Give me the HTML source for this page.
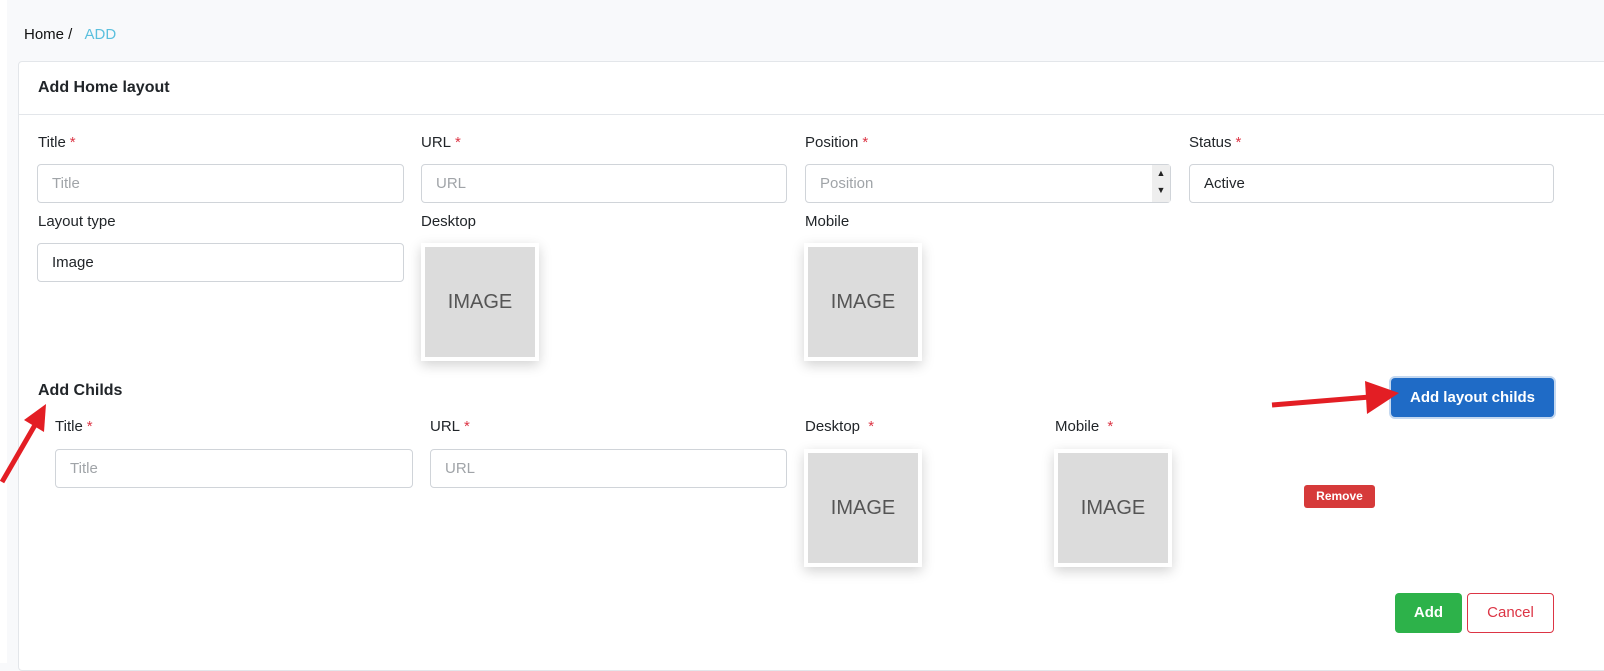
<!DOCTYPE html>
<html><head><style>
*{box-sizing:border-box;margin:0;padding:0}
body{width:1604px;height:663px;background:#f8f9fb;font-family:"Liberation Sans",sans-serif;position:relative;overflow:hidden;color:#212529}
.a{position:absolute}
.lbl{font-size:15px;color:#212529}
.req{color:#dc3545;margin-left:4px}
.inp{position:absolute;height:39px;border:1px solid #d0d4d9;border-radius:4px;background:#fff;font-size:15px;padding:10px 14px;color:#a0a4a8}
.val{color:#212529}
.img{position:absolute;width:118px;height:118px;background:#fff;box-shadow:0 4px 12px rgba(0,0,0,.18);padding:4px}
.img div{width:110px;height:110px;background:#dcdcdc;color:#555;font-size:20px;display:flex;align-items:center;justify-content:center}
</style></head><body>
<div class="a" style="left:0;top:0;width:7px;height:663px;background:#fff"></div>
<div class="a" style="left:24px;top:26px;font-size:15px;color:#111">Home / <span style="color:#5bc0de;margin-left:8px">ADD</span></div>
<div class="a" style="left:18px;top:61px;width:1600px;height:610px;background:#fff;border:1px solid #e3e6ea;border-radius:4px"></div>
<div class="a" style="left:19px;top:114px;width:1590px;height:1px;background:#e3e6ea"></div>
<div class="a" style="left:38px;top:79px;font-size:16px;font-weight:bold">Add Home layout</div>

<div class="a lbl" style="left:38px;top:134px">Title<span class="req">*</span></div>
<div class="a lbl" style="left:421px;top:134px">URL<span class="req">*</span></div>
<div class="a lbl" style="left:805px;top:134px">Position<span class="req">*</span></div>
<div class="a lbl" style="left:1189px;top:134px">Status<span class="req">*</span></div>
<div class="inp" style="left:37px;top:164px;width:367px">Title</div>
<div class="inp" style="left:421px;top:164px;width:366px">URL</div>
<div class="inp" style="left:805px;top:164px;width:366px">Position<span class="a" style="right:0;top:0;width:18px;height:37px;background:#eee;font-size:9px;color:#222;text-align:center;line-height:17px">▲<br>▼</span></div>
<div class="inp val" style="left:1189px;top:164px;width:365px">Active</div>

<div class="a lbl" style="left:38px;top:213px">Layout type</div>
<div class="a lbl" style="left:421px;top:213px">Desktop</div>
<div class="a lbl" style="left:805px;top:213px">Mobile</div>
<div class="inp val" style="left:37px;top:243px;width:367px">Image</div>
<div class="img" style="left:421px;top:243px"><div>IMAGE</div></div>
<div class="img" style="left:804px;top:243px"><div>IMAGE</div></div>

<div class="a" style="left:38px;top:382px;font-size:16px;font-weight:bold">Add Childs</div>
<div class="a" style="left:1389px;top:376px;width:167px;height:43px;border:3px solid #c4d8f0;border-radius:6px"></div>
<div class="a" style="left:1391px;top:378px;width:163px;height:39px;background:#1f6bc6;border-radius:4px;color:#fff;font-size:15px;font-weight:bold;text-align:center;line-height:39px">Add layout childs</div>

<div class="a lbl" style="left:55px;top:418px">Title<span class="req">*</span></div>
<div class="a lbl" style="left:430px;top:418px">URL<span class="req">*</span></div>
<div class="a lbl" style="left:805px;top:418px">Desktop <span class="req">*</span></div>
<div class="a lbl" style="left:1055px;top:418px">Mobile <span class="req">*</span></div>
<div class="inp" style="left:55px;top:449px;width:358px">Title</div>
<div class="inp" style="left:430px;top:449px;width:357px">URL</div>
<div class="img" style="left:804px;top:449px"><div>IMAGE</div></div>
<div class="img" style="left:1054px;top:449px"><div>IMAGE</div></div>
<div class="a" style="left:1304px;top:485px;width:71px;height:23px;background:#d63a3a;border-radius:3px;color:#fff;font-size:12px;font-weight:bold;text-align:center;line-height:23px">Remove</div>

<div class="a" style="left:1395px;top:593px;width:67px;height:40px;background:#2db24a;border-radius:4px;color:#fff;font-size:15px;font-weight:bold;text-align:center;line-height:40px">Add</div>
<div class="a" style="left:1467px;top:593px;width:87px;height:40px;border:1px solid #dc3545;border-radius:4px;color:#dc3545;font-size:15px;text-align:center;line-height:38px">Cancel</div>

<svg class="a" style="left:0;top:0" width="1604" height="663">
<line x1="1272" y1="405" x2="1370" y2="397" stroke="#e31e24" stroke-width="5"/>
<polygon points="1399,393 1365,381 1367,414" fill="#e31e24"/>
<line x1="2" y1="482" x2="35" y2="425" stroke="#e31e24" stroke-width="5"/>
<polygon points="46,404 24,420 44,432" fill="#e31e24"/>
</svg>
</body></html>
